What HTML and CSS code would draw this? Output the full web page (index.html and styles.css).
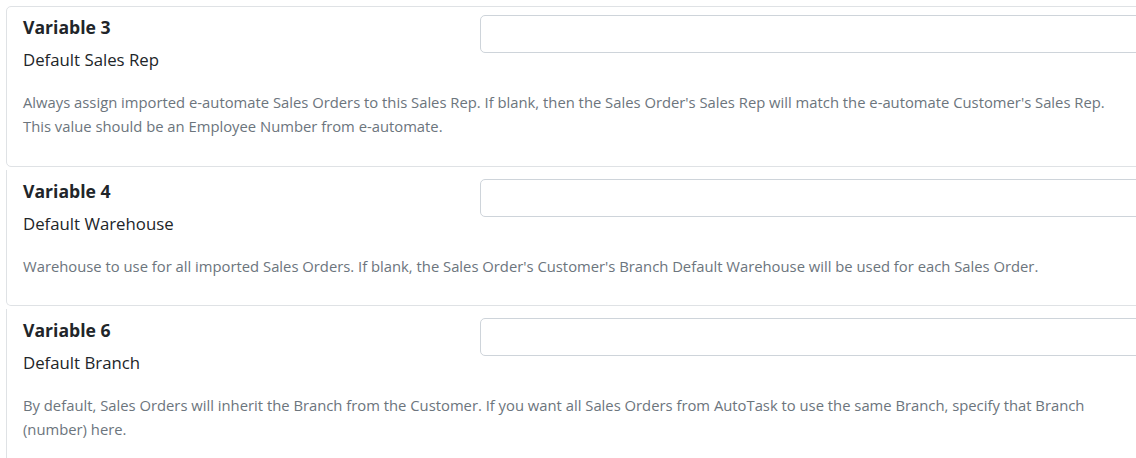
FILE: index.html
```html
<!DOCTYPE html>
<html lang="en">
<head>
<meta charset="utf-8">
<title>Variables</title>
<link rel="stylesheet" href="styles.css">
</head>
<body>
<div class="frame">
<div class="list">
  <div class="card">
    <div class="top">
      <div class="labels">
        <div class="title">Variable 3</div>
        <div class="subtitle">Default Sales Rep</div>
      </div>
      <input class="field" type="text">
    </div>
    <p class="desc">Always assign imported e-automate Sales Orders to this Sales Rep. If blank, then the Sales Order's Sales Rep will match the e-automate Customer's Sales Rep. This value should be an Employee Number from e-automate.</p>
  </div>
  <div class="card">
    <div class="top">
      <div class="labels">
        <div class="title">Variable 4</div>
        <div class="subtitle">Default Warehouse</div>
      </div>
      <input class="field" type="text">
    </div>
    <p class="desc">Warehouse to use for all imported Sales Orders. If blank, the Sales Order's Customer's Branch Default Warehouse will be used for each Sales Order.</p>
  </div>
  <div class="card">
    <div class="top">
      <div class="labels">
        <div class="title">Variable 6</div>
        <div class="subtitle">Default Branch</div>
      </div>
      <input class="field" type="text">
    </div>
    <p class="desc">By default, Sales Orders will inherit the Branch from the Customer. If you want all Sales Orders from AutoTask to use the same Branch, specify that Branch (number) here.</p>
  </div>
</div>
</div>
</body>
</html>
```

FILE: styles.css
```css
html, body {
  margin: 0;
  padding: 0;
  background: #ffffff;
}

body {
  font-family: "Open Sans", "Segoe UI", "Noto Sans", sans-serif;
  color: #212529;
}

.frame {
  width: 1136px;
  height: 458px;
  overflow: hidden;
}

.list {
  padding: 6px 0 0 6px;
  width: 1260px;
}

.card {
  border: 1px solid #dfe2e5;
  border-radius: 5px 0 0 5px;
  padding: 8px 16px 11.5px 16px;
  margin-bottom: 3px;
  background: #fff;
}

.card + .card {
  border-top: none;
  border-radius: 0 0 0 5px;
  padding-top: 9px;
}

.top {
  display: grid;
  grid-template-columns: 457px 1fr;
}

.title {
  font-size: 17.6px;
  font-weight: 700;
  line-height: 24px;
}

.subtitle {
  font-size: 16.8px;
  line-height: 26px;
  margin-top: 8px;
}

.field {
  height: 38px;
  box-sizing: border-box;
  border: 1px solid #ced4da;
  border-radius: 5px;
  background: #fff;
  margin: 0;
  padding: 6px 12px;
  width: 100%;
}

.desc {
  margin: 17px 0 16px 0;
  max-width: 1105px;
  font-size: 14.8px;
  line-height: 24px;
  color: #6c757d;
}
```
